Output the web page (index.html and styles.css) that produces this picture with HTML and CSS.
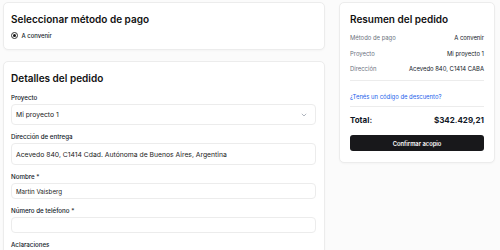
FILE: index.html
```html
<!DOCTYPE html>
<html lang="es">
<head>
    <meta charset="UTF-8">
    <meta name="viewport" content="width=device-width, initial-scale=1.0">
    <title>Checkout</title>
    <link rel="stylesheet" href="styles.css">
</head>
<body>
    <div class="checkout">
        <div class="main-column">
            <section class="card">
                <h2 class="card-title">Seleccionar método de pago</h2>
                <label class="radio-option">
                    <span class="radio-dot"></span>
                    A convenir
                </label>
            </section>

            <section class="card details">
                <h2 class="card-title">Detalles del pedido</h2>

                <div class="field">
                    <label class="field-label">Proyecto</label>
                    <div class="select-box">
                        <span>Mi proyecto 1</span>
                        <svg width="6" height="4" viewBox="0 0 6 4">
                            <path d="M0.8 0.8 L3 3 L5.2 0.8" fill="none" stroke="#9ca3af" stroke-width="0.8"/>
                        </svg>
                    </div>
                </div>

                <div class="field">
                    <label class="field-label">Dirección de entrega</label>
                    <div class="text-box large">Acevedo 840, C1414 Cdad. Autónoma de Buenos Aires, Argentina</div>
                </div>

                <div class="field">
                    <label class="field-label">Nombre *</label>
                    <div class="text-box small">Martín Vaisberg</div>
                </div>

                <div class="field">
                    <label class="field-label">Número de teléfono *</label>
                    <div class="text-box small"></div>
                </div>

                <div class="field">
                    <label class="field-label">Aclaraciones</label>
                </div>
            </section>
        </div>

        <aside class="card summary">
            <h2 class="card-title">Resumen del pedido</h2>
            <div class="summary-row">
                <span class="summary-key">Método de pago</span>
                <span class="summary-value">A convenir</span>
            </div>
            <div class="summary-row">
                <span class="summary-key">Proyecto</span>
                <span class="summary-value">Mi proyecto 1</span>
            </div>
            <div class="summary-row">
                <span class="summary-key">Dirección</span>
                <span class="summary-value">Acevedo 840, C1414 CABA</span>
            </div>
            <div class="discount">
                <a href="#" class="discount-link">¿Tenés un código de descuento?</a>
            </div>
            <div class="total-row">
                <span>Total:</span>
                <span>$342.429,21</span>
            </div>
            <button class="confirm-button">Confirmar acopio</button>
        </aside>
    </div>
</body>
</html>
```

FILE: styles.css
```css
* {
    margin: 0;
    padding: 0;
    box-sizing: border-box;
}

body {
    font-family: Inter, 'Liberation Sans', sans-serif;
    background: #fbfbfb;
    color: #111827;
    padding: 2px 5px 0 3px;
    height: 250px;
    overflow: hidden;
}

.checkout {
    display: flex;
    gap: 14px;
    align-items: flex-start;
}

.main-column {
    width: 322px;
    display: flex;
    flex-direction: column;
    gap: 11px;
}

.card {
    background: white;
    border: 1px solid #ececec;
    border-radius: 5px;
    box-shadow: 0 1px 2px rgba(0, 0, 0, 0.03);
    padding: 10px 8px 10px 7px;
}

.card-title {
    font-size: 10px;
    font-weight: 600;
    line-height: 12px;
    color: #111;
}

.radio-option {
    display: flex;
    align-items: center;
    gap: 3.5px;
    margin-top: 7px;
    font-size: 5.9px;
    font-weight: 500;
    line-height: 7px;
}

.radio-dot {
    width: 7px;
    height: 7px;
    border-radius: 50%;
    border: 1px solid #333;
    display: flex;
    align-items: center;
    justify-content: center;
}

.radio-dot::after {
    content: "";
    width: 3px;
    height: 3px;
    border-radius: 50%;
    background: #111;
}

.details {
    padding-top: 10px;
    height: 220px;
}

.details .card-title {
    margin-bottom: 10px;
}

.field {
    margin-bottom: 8px;
}

.field-label {
    display: block;
    font-size: 6.2px;
    font-weight: 500;
    line-height: 7px;
    margin-bottom: 3px;
}

.select-box,
.text-box {
    border: 1px solid #ececec;
    border-radius: 4px;
    background: white;
    display: flex;
    align-items: center;
    padding: 0 4px;
    color: #222;
}

.select-box {
    height: 21px;
    font-size: 6.8px;
    justify-content: space-between;
    padding-right: 8px;
}

.text-box.large {
    height: 22px;
    font-size: 6.8px;
}

.text-box.small {
    height: 16px;
    font-size: 6.2px;
}

.summary {
    width: 156px;
    padding: 10px 10px 11px;
}

.summary-row {
    display: flex;
    justify-content: space-between;
    font-size: 5.9px;
    margin-top: 8.5px;
    line-height: 7px;
}

.summary-row:first-of-type {
    margin-top: 9px;
}

.summary-key {
    color: #6b7280;
}

.discount {
    border-top: 1px solid #ececec;
    border-bottom: 1px solid #ececec;
    margin-top: 8px;
    padding: 8.5px 0 6.5px;
    line-height: 7px;
}

.discount-link {
    font-size: 5.9px;
    color: #2563eb;
    text-decoration: none;
}

.total-row {
    display: flex;
    justify-content: space-between;
    font-size: 8px;
    font-weight: 700;
    line-height: 10px;
    margin-top: 8px;
}

.confirm-button {
    display: block;
    width: 100%;
    height: 16px;
    margin-top: 10px;
    background: #18181b;
    color: white;
    border: none;
    border-radius: 3px;
    font-family: inherit;
    font-size: 5.8px;
    font-weight: 600;
}
```
